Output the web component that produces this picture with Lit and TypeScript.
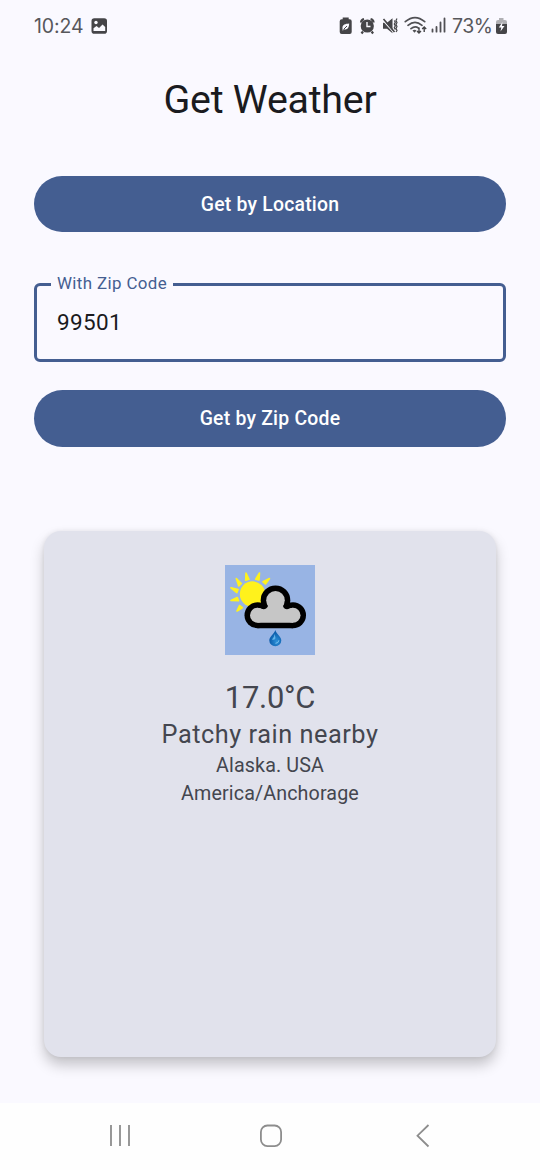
import { LitElement, html, css } from "lit";
import { customElement } from "lit/decorators.js";

@customElement("status-bar")
class StatusBar extends LitElement {
  static styles = css`
    :host { display: flex; height: 52px; align-items: center; padding: 0 32px 0 34px; box-sizing: border-box;
      font: 400 19.500px/24px Inter, sans-serif; color: #57575b; }
    .time { width: 56.500px; letter-spacing: -0.100px; white-space: nowrap; }
    .grow { flex: 1; }
    .pct { width: 43px; letter-spacing: -0.450px; white-space: nowrap; }
    svg { display: block; flex: none; }
  `;
  render() {
    return html`
      <span class="time">10:24</span>
      <svg width="17" height="18" viewBox="0 0 17 18">
        <rect x="0.5" y="1.200" width="15.500" height="15.500" rx="2.800" fill="#454548"/>
        <path d="M2.500 14V11.300l3-2.300 2.500 2 3.500-3.500 2.700 2.500v4z" fill="#fafaff"/>
        <circle cx="5" cy="5.500" r="1.700" fill="#fafaff"/>
      </svg>
      <span class="grow"></span>
      <svg width="113" height="24" viewBox="335 14 113 24">
        <path d="M342.700 17.500h6v1.800h1a2 2 0 0 1 2 2V32a2 2 0 0 1-2 2h-8a2 2 0 0 1-2-2V21.300a2 2 0 0 1 2-2h1z" fill="#454548"/>
        <path d="M342.500 29c-.5-5 3-5 6.700-5.500-.2 4-1.600 6.700-5 5.800l-1.500 1.400" fill="#fafaff"/>
        <path d="M343.500 29.500l3.500-3.500" stroke="#454548" stroke-width="1"/>
        <circle cx="367.300" cy="26" r="6.600" fill="#454548"/>
        <path d="M361 22.500a4 4 0 0 1 3-3.500M373.600 22.500a4 4 0 0 0-3-3.500M363 31.500l-1.500 2M371.600 31.500l1.500 2" stroke="#454548" stroke-width="2.200" fill="none"/>
        <path d="M367 22v4.500h3.500" stroke="#fafaff" stroke-width="1.400" fill="none"/>
        <path d="M383 22.700h4l5.500-4.500v15l-5.500-4.500h-4z" fill="#454548"/>
        <path d="M382.500 19.800l11.500 13" stroke="#fafaff" stroke-width="1.200"/>
        <path d="M383.500 19l11 13" stroke="#454548" stroke-width="1.600"/>
        <path d="M394.300 20.500l1 1.800-1 1.800 1 1.800-1 1.800 1 1.800M397 18.500l-1 2 1 2-1 2 1 2-1 2 1 2-1 1.500" stroke="#454548" stroke-width="1.200" fill="none"/>
        <g fill="none" stroke="#505054" stroke-width="1.700" stroke-linecap="round">
          <path d="M405.300 21.700Q415 13.500 424.700 21.700M408 25.300q7-5.700 14 0M411 28.700q4-3.200 7.500-.5"/>
        </g>
        <path d="M412.500 30.500q2-1.500 4 0l-2 2.200z" fill="#505054"/>
        <path d="M419 27.500v5M417 31l2 2 2-2M424.200 32v-5M422.200 29l2-2 2 2" stroke="#454548" stroke-width="1.400" fill="none"/>
        <path d="M432.500 29.500v2.200M436.500 27v4.700M440.500 22.500v9.200M444.500 18.500v13.200" stroke="#505054" stroke-width="1.800" stroke-linecap="round"/>
      </svg>
      <svg width="4" height="2"></svg>
      <span class="pct">73%</span>
      <svg width="13" height="18" viewBox="0 0 13 18">
        <path d="M4 1h4.500v2H10a2 2 0 0 1 2 2v3H1V5a2 2 0 0 1 2-2h1z" fill="#b0b0b4"/>
        <path d="M1 7h11v8a2 2 0 0 1-2 2H3a2 2 0 0 1-2-2z" fill="#454548"/>
        <path d="M7.500 5L3.800 10.500h2.500L5.500 14.500l4-5.500H7z" fill="#fafaff"/>
      </svg>
    `;
  }
}

@customElement("weather-icon")
class WeatherIcon extends LitElement {
  static styles = css`
    :host { display: block; width: 90px; height: 90px; background: #98b4e4; }
    svg { display: block; }
  `;
  render() {
    return html`
      <svg width="90" height="90" viewBox="0 0 90 90">
        <defs>
          <radialGradient id="drop" cx="0.600" cy="0.700" r="0.600">
            <stop offset="0" stop-color="#2c90d8"/><stop offset="1" stop-color="#0a5aa8"/>
          </radialGradient>
        </defs>
        <g fill="#fff21c">
          <circle cx="27.500" cy="29" r="12.700"/>
          <path d="M21 8l3 6.300-3.300 1zM34.500 8l-.5 7-3.300-.8zM44.500 13.500l-4 5.500-2.500-2.200zM11.300 13.500l5 5-2.500 2.500zM6 22.800l7 1.800-1.200 3zM6 35.500l6.300-3 1.200 3.200zM12 46l2.500-5.500 2.800 2.200z" stroke="#fff21c" stroke-width="1.600" stroke-linejoin="round"/>
        </g>
        <g fill="#000">
          <circle cx="32.500" cy="50.200" r="13"/><circle cx="50.500" cy="35.300" r="14.800"/>
          <circle cx="68" cy="50.200" r="13"/><path d="M32.500 45h35.500v18.200H32.500z"/>
        </g>
        <g fill="#c6c6c6">
          <circle cx="32.500" cy="50.200" r="7.500"/><circle cx="50.500" cy="35.300" r="9.300"/>
          <circle cx="68" cy="50.200" r="7.500"/><path d="M42 38h17l-1 3q.5 3 4 3.300l6-1.600v15H32.500v-15l6 1.600q3.500-.3 4.500-3.300z"/>
        </g>
        <path d="M50.300 65c1 4.200 6 6.200 6 10.500a6 5.700 0 0 1-12 0c0-4.300 5-6.300 6-10.500z" fill="url(#drop)"/>
        <path d="M49.800 69q-.5 3-2.800 5.500q2.500 1 3.500-1.300z" fill="#62b4ea"/>
        <path d="M50.500 78.300q3 0 3.400-3" stroke="#7cc4f0" fill="none"/>
      </svg>
    `;
  }
}

@customElement("nav-bar")
class NavBar extends LitElement {
  static styles = css`
    :host { display: block; height: 67px; background: #fefefe; }
    .row { display: flex; height: 65px; align-items: center; justify-content: center; gap: 127px; padding-left: 2px; }
    svg { display: block; flex: none; fill: none; stroke: #8d8d8d; stroke-width: 1.800; }
  `;
  render() {
    return html`<div class="row">
      <svg width="24" height="24" viewBox="0 0 24 24"><path d="M3 1v21M12 1v21M21 1v21"/></svg>
      <svg width="24" height="24" viewBox="0 0 24 24"><rect x="1.900" y="1.500" width="20.200" height="20.600" rx="6.500"/></svg>
      <svg width="24" height="24" viewBox="0 0 24 24"><path d="M18.500 1L7.500 11.700l11 10.800"/></svg>
    </div>`;
  }
}

@customElement("app-root")
class AppRoot extends LitElement {
  static styles = css`
    :host { display: flex; flex-direction: column; height: 1170px; background: #faf9ff; color: #1a1b20;
      font-family: Roboto, sans-serif; overflow: hidden; }
    main { flex: 1; padding: 0 34px; display: flex; flex-direction: column; }
    h1 { margin: 22px 0 0; font-size: 39.400px; line-height: 51px; font-weight: 400; text-align: center; letter-spacing: -0.250px; }
    button { border: 0; margin: 0; padding: 2px 0 0; height: 56.500px; border-radius: 29px; background: #445e91; color: #fff;
      font: 500 19.400px/28px Roboto, sans-serif; letter-spacing: 0.220px; flex: none; }
    .locate { margin-top: 50.500px; }
    fieldset { margin: 41px 0 0; padding: 0 20px; height: 88.500px; box-sizing: border-box; border: 3px solid #445e91;
      border-radius: 6px; min-width: 0; flex: none; }
    legend { margin-left: -6px; padding: 0 6px 2px; font-size: 16.900px; line-height: 20px; letter-spacing: 0.380px; color: #445e91; }
    .value { font-size: 22.500px; line-height: 30px; letter-spacing: 0.350px; margin-top: 12px; }
    .zip { margin-top: 28.500px; }
    .card { margin: 84.500px 10px 0; height: 526px; flex: none; box-sizing: border-box; padding-top: 34px; border-radius: 17px;
      background: #e1e2ec; color: #44464f; display: flex; flex-direction: column; align-items: center;
      box-shadow: 0 8px 14px rgba(0,0,0,.22), 0 0 5px rgba(0,0,0,.07); }
    .temp { margin-top: 22.500px; font-size: 30.900px; line-height: 40px; letter-spacing: -0.250px; }
    .cond { font-size: 25.300px; line-height: 34px; letter-spacing: 0.530px; }
    .place { font-size: 19.700px; line-height: 28.500px; letter-spacing: 0.120px; }
  `;
  render() {
    return html`
      <status-bar></status-bar>
      <main>
        <h1>Get Weather</h1>
        <button class="locate">Get by Location</button>
        <fieldset><legend>With Zip Code</legend><div class="value">99501</div></fieldset>
        <button class="zip">Get by Zip Code</button>
        <section class="card">
          <weather-icon></weather-icon>
          <div class="temp">17.0°C</div>
          <div class="cond">Patchy rain nearby</div>
          <div class="place">Alaska. USA</div>
          <div class="place">America/Anchorage</div>
        </section>
      </main>
      <nav-bar></nav-bar>
    `;
  }
}
